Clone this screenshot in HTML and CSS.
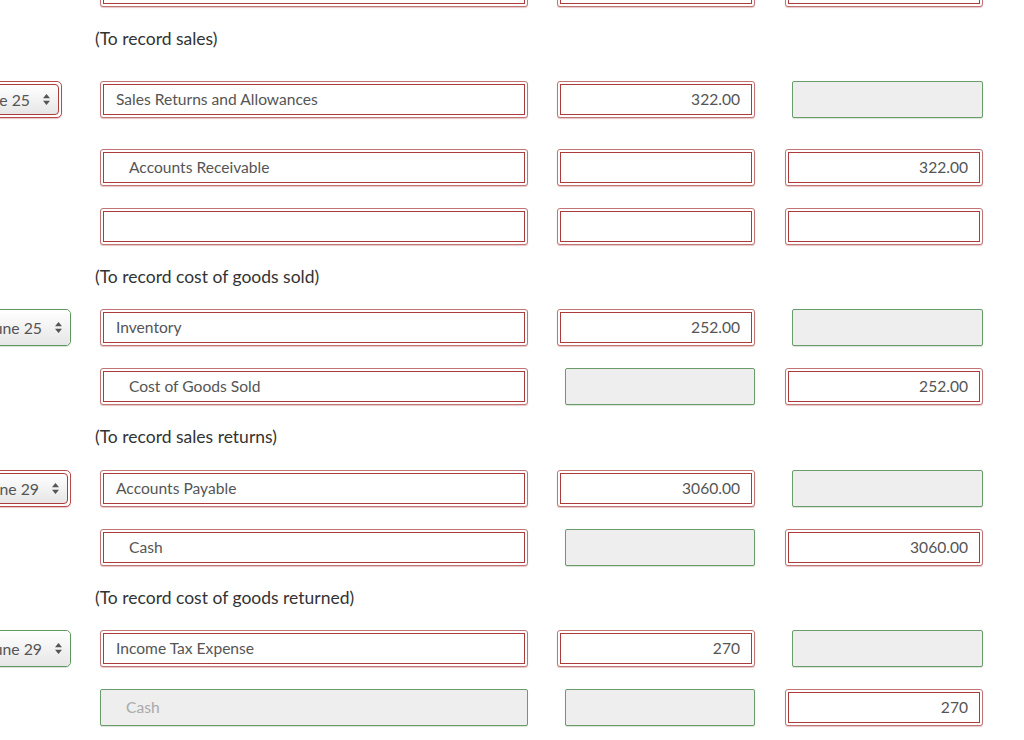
FILE: index.html
```html
<!DOCTYPE html>
<html lang="en">
<head>
<meta charset="utf-8">
<title>Journal entries</title>
<link rel="stylesheet" href="styles.css">
</head>
<body>
<div class="sheet">

  <div class="row">
    <div class="date-cell"></div>
    <div class="err wide"><div class="field"></div></div>
    <div class="err amt"><div class="field num"></div></div>
    <div class="err amt"><div class="field num"></div></div>
  </div>

  <div class="note">(To record sales)</div>

  <div class="row row-first">
    <div class="err sel sel-shift"><div class="select"><span>June 25</span><svg class="arrows" width="7" height="11" viewBox="0 0 7 11"><path d="M3.5 0 L7 4.3 L0 4.3 Z M0 6.7 L7 6.7 L3.5 11 Z" fill="#555"/></svg></div></div>
    <div class="err wide"><div class="field">Sales Returns and Allowances</div></div>
    <div class="err amt"><div class="field num">322.00</div></div>
    <div class="ok amt-ok credit-ok"></div>
  </div>

  <div class="row">
    <div class="date-cell"></div>
    <div class="err wide"><div class="field indent">Accounts Receivable</div></div>
    <div class="err amt"><div class="field num"></div></div>
    <div class="err amt"><div class="field num">322.00</div></div>
  </div>

  <div class="row">
    <div class="date-cell"></div>
    <div class="err wide"><div class="field"></div></div>
    <div class="err amt"><div class="field num"></div></div>
    <div class="err amt"><div class="field num"></div></div>
  </div>

  <div class="note">(To record cost of goods sold)</div>

  <div class="row">
    <div class="ok-sel sel"><div class="select"><span>June 25</span><svg class="arrows" width="7" height="11" viewBox="0 0 7 11"><path d="M3.5 0 L7 4.3 L0 4.3 Z M0 6.7 L7 6.7 L3.5 11 Z" fill="#555"/></svg></div></div>
    <div class="err wide"><div class="field">Inventory</div></div>
    <div class="err amt"><div class="field num">252.00</div></div>
    <div class="ok amt-ok credit-ok"></div>
  </div>

  <div class="row">
    <div class="date-cell"></div>
    <div class="err wide"><div class="field indent">Cost of Goods Sold</div></div>
    <div class="ok amt-ok"></div>
    <div class="err amt"><div class="field num">252.00</div></div>
  </div>

  <div class="note">(To record sales returns)</div>

  <div class="row">
    <div class="err sel"><div class="select"><span>June 29</span><svg class="arrows" width="7" height="11" viewBox="0 0 7 11"><path d="M3.5 0 L7 4.3 L0 4.3 Z M0 6.7 L7 6.7 L3.5 11 Z" fill="#555"/></svg></div></div>
    <div class="err wide"><div class="field">Accounts Payable</div></div>
    <div class="err amt"><div class="field num">3060.00</div></div>
    <div class="ok amt-ok credit-ok"></div>
  </div>

  <div class="row">
    <div class="date-cell"></div>
    <div class="err wide"><div class="field indent">Cash</div></div>
    <div class="ok amt-ok"></div>
    <div class="err amt"><div class="field num">3060.00</div></div>
  </div>

  <div class="note">(To record cost of goods returned)</div>

  <div class="row">
    <div class="ok-sel sel"><div class="select"><span>June 29</span><svg class="arrows" width="7" height="11" viewBox="0 0 7 11"><path d="M3.5 0 L7 4.3 L0 4.3 Z M0 6.7 L7 6.7 L3.5 11 Z" fill="#555"/></svg></div></div>
    <div class="err wide"><div class="field">Income Tax Expense</div></div>
    <div class="err amt"><div class="field num">270</div></div>
    <div class="ok amt-ok credit-ok"></div>
  </div>

  <div class="row">
    <div class="date-cell"></div>
    <div class="ok wide-ok">Cash</div>
    <div class="ok amt-ok"></div>
    <div class="err amt"><div class="field num">270</div></div>
  </div>

</div>
</body>
</html>
```

FILE: styles.css
```css
* {
  box-sizing: border-box;
}

html, body {
  margin: 0;
  padding: 0;
  background: #ffffff;
  overflow: hidden;
}

body {
  font-family: Lato, "Open Sans", "Liberation Sans", sans-serif;
  color: #555555;
  width: 1024px;
  height: 740px;
}

.sheet {
  display: flex;
  flex-direction: column;
  gap: 22px;
  margin-top: -30px;
}

.row {
  display: grid;
  grid-template-columns: 71px 428px 198px 199px;
  column-gap: 29px;
  height: 37px;
  align-items: stretch;
}

.row-first {
  margin-top: 9px;
  margin-bottom: 9px;
}

.note {
  height: 20.5px;
  line-height: 20.5px;
  font-size: 17.5px;
  color: #333333;
  padding-left: 95px;
}

/* red "error" double frame */
.err {
  border: 1px solid #c07474;
  border-radius: 3px;
  padding: 2px;
  background: #ffffff;
  box-shadow: 0 1px 1px rgba(170, 60, 60, 0.3);
}

.field {
  height: 100%;
  border: 1px solid #ad3b3b;
  padding: 0 11px 0 12px;
  font-size: 15.6px;
  line-height: 29px;
  color: #555555;
  white-space: nowrap;
  overflow: hidden;
}

.field.indent {
  padding-left: 25px;
}

.field.num {
  text-align: right;
}

.amt {
  width: 198px;
  justify-self: end;
}

/* green "ok" (disabled) boxes */
.ok {
  border: 1px solid #6a9b6a;
  border-radius: 2px;
  background: #eeeeee;
  box-shadow: 0 1px 1px rgba(60, 118, 61, 0.2);
}

.amt-ok {
  width: 190px;
  justify-self: end;
}

.credit-ok {
  width: 191px;
}

.wide-ok {
  font-size: 15.6px;
  line-height: 35px;
  padding-left: 25px;
  color: #aaaaaa;
}

/* date select */
.sel {
  width: 120px;
  justify-self: end;
}

.sel-shift {
  margin-right: 9px;
}

.err.sel {
  border-radius: 5px;
  border-color: #b84a4a;
}

.select {
  height: 100%;
  display: flex;
  align-items: center;
  justify-content: flex-end;
  gap: 13px;
  padding-right: 8px;
  border-radius: 4px;
  font-size: 15.8px;
  color: #555555;
  background: linear-gradient(#ffffff, #e6e6e6);
  white-space: nowrap;
}

.err .select {
  border: 1px solid #ad3b3b;
}

.ok-sel {
  border: 1px solid #5f955f;
  border-radius: 5px;
  overflow: hidden;
  box-shadow: 0 1px 1px rgba(60, 118, 61, 0.2);
}

.ok-sel .select {
  border-radius: 4px;
  padding-right: 8px;
}

.arrows {
  flex: none;
}
```
